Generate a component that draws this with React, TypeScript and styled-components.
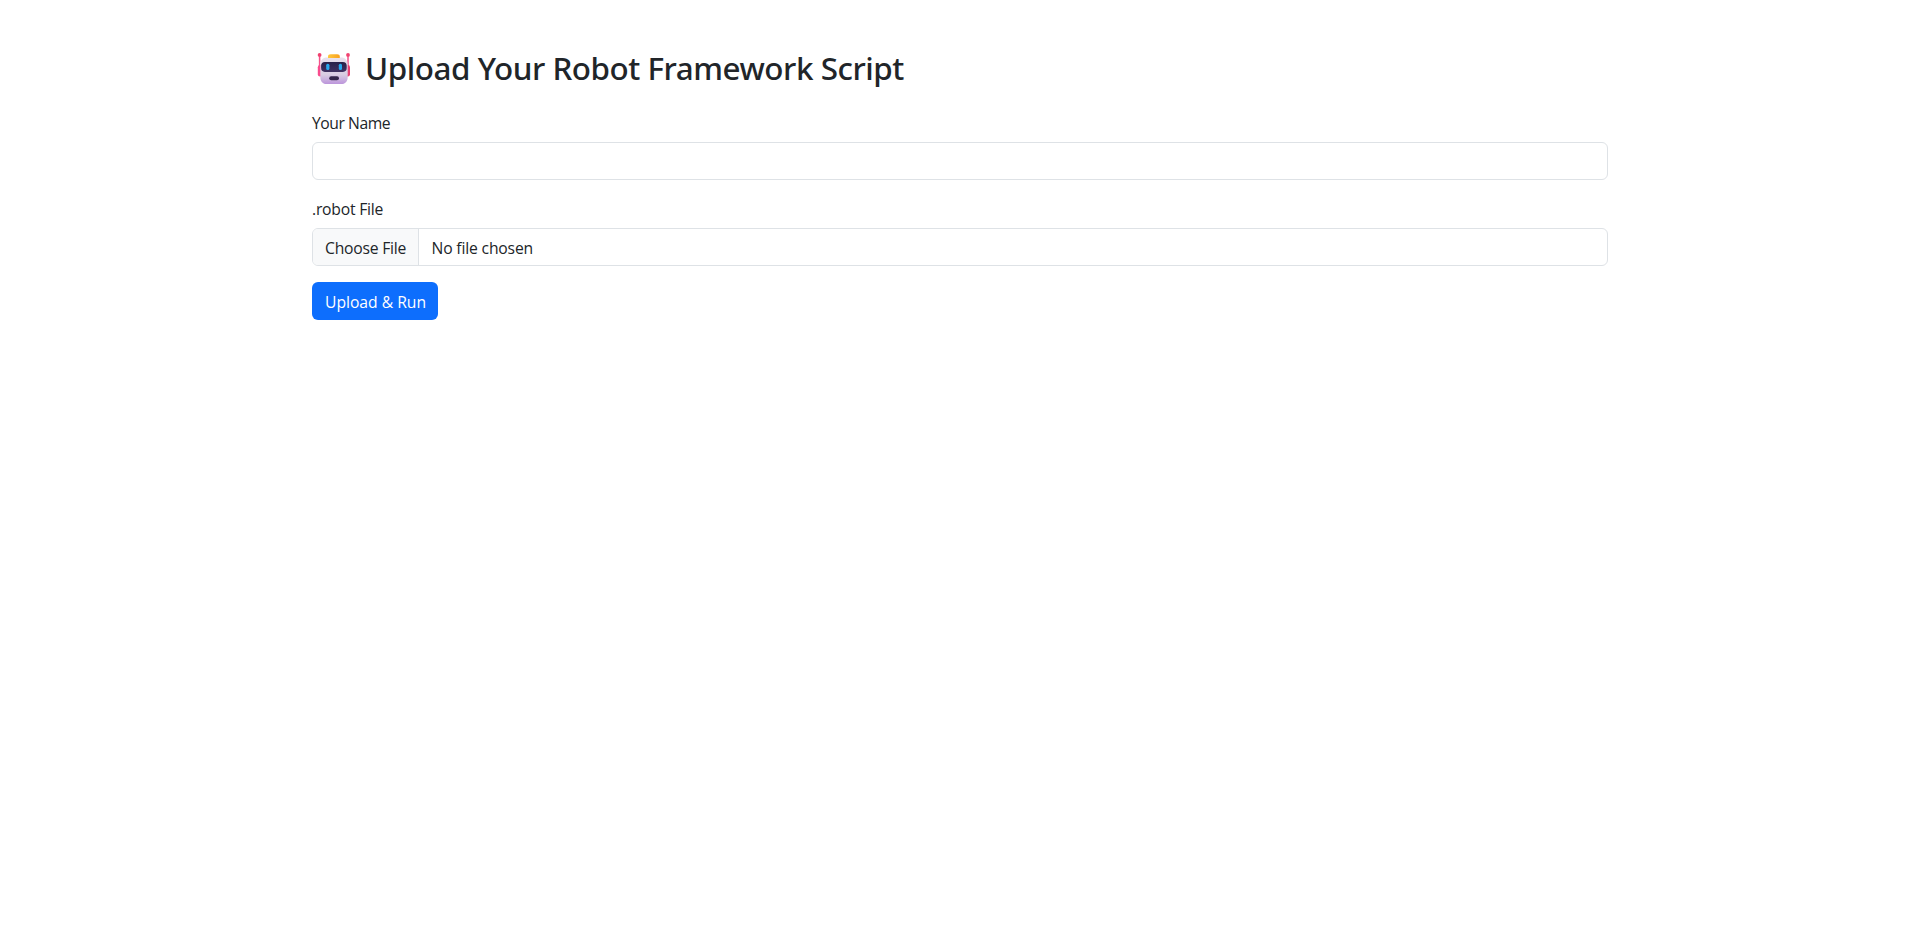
import React from "react";
import styled, { createGlobalStyle } from "styled-components";

const GlobalStyle = createGlobalStyle`
  *, *::before, *::after { box-sizing: border-box; }
  body {
    margin: 0;
    background: #fff;
    color: #212529;
    font-family: "Segoe UI", "Open Sans", "Noto Sans", sans-serif;
    font-size: 15.7px;
    line-height: 24px;
  }
`;

const Container = styled.main`
  width: 100%;
  max-width: 1320px;
  margin: 48px auto 0;
  padding: 0 12px;
`;

const Title = styled.h2`
  display: flex;
  align-items: center;
  height: 38.4px;
  margin: 0 0 24px;
  font-family: "Segoe UI", "Noto Sans", sans-serif;
  font-size: 31.4px;
  font-weight: 500;
  line-height: 38.4px;
  white-space: nowrap;
`;

const TitleText = styled.span`
  padding-top: 2px;
  letter-spacing: -0.46px;
`;

const RobotIcon = styled.svg`
  flex: none;
  width: 34px;
  height: 34px;
  margin: 3px 14px 0 5px;
`;

const Spaced = styled.span<{ $tracking: number }>`
  letter-spacing: ${(p) => p.$tracking}px;
  white-space: nowrap;
`;

const Field = styled.div`
  margin-bottom: 16px;
`;

const Label = styled.label`
  display: block;
  width: max-content;
  padding-top: 1px;
  margin-bottom: 7px;
`;

const TextInput = styled.input`
  display: block;
  width: 100%;
  height: 38px;
  padding: 6px 12px;
  border: 1px solid #dee2e6;
  border-radius: 6px;
  background: #fff;
  color: inherit;
  font: inherit;
  outline: none;
`;

const FilePicker = styled.div`
  display: flex;
  height: 38px;
  overflow: hidden;
  border: 1px solid #dee2e6;
  border-radius: 6px;
  background: #fff;
`;

const FileButton = styled.button`
  width: 106px;
  padding: 1px 0 0 12px;
  border: 0;
  border-right: 1px solid #dee2e6;
  background: #f8f9fa;
  color: inherit;
  font: inherit;
  text-align: left;
`;

const FileName = styled.span`
  padding: 6.5px 12px 0 12.5px;
`;

const SubmitButton = styled.button`
  display: block;
  width: 126px;
  height: 38px;
  padding: 1px 0 0 13px;
  border: 0;
  border-radius: 6px;
  background: #0d6efd;
  color: #fff;
  font: inherit;
  text-align: left;
`;

function Robot() {
  return (
    <RobotIcon viewBox="0 0 34 34" aria-hidden="true">
      <defs>
        <linearGradient id="face" x1="0" y1="0" x2="0" y2="1">
          <stop offset="0" stopColor="#e9e2ee" />
          <stop offset="0.65" stopColor="#d9cbe2" />
          <stop offset="1" stopColor="#bb94db" />
        </linearGradient>
        <linearGradient id="visor" x1="0" y1="0" x2="0" y2="1">
          <stop offset="0" stopColor="#29224b" />
          <stop offset="1" stopColor="#403062" />
        </linearGradient>
        <linearGradient id="cap" x1="0" y1="0" x2="1" y2="0">
          <stop offset="0" stopColor="#ffc83d" />
          <stop offset="1" stopColor="#f9a11e" />
        </linearGradient>
      </defs>
      <path d="M2.6 3v13M31 3v13" stroke="#f4528a" strokeWidth="1.5" />
      <circle cx="2.6" cy="2.9" r="1.9" fill="#f0426f" />
      <circle cx="31" cy="2.9" r="1.9" fill="#f0426f" />
      <rect x="0.8" y="13" width="5" height="11.5" rx="2.2" fill="#f94b8d" />
      <rect x="28" y="13" width="5" height="11.5" rx="2.2" fill="#e83f73" />
      <path d="M10 5.4h14c4.2 0 6.7 2.7 6.7 7v12.6c0 4.6-2.5 7.1-6.7 7.1H10c-4.2 0-6.7-2.5-6.7-7.1V12.4c0-4.3 2.5-7 6.7-7Z" fill="url(#face)" />
      <path d="M11 6V4.4C11 2.9 12 2.2 13.6 2.2h6.6c1.6 0 2.6.7 2.6 2.2V6Z" fill="url(#cap)" />
      <rect x="4.1" y="10" width="25.6" height="9.9" rx="3.8" fill="url(#visor)" />
      <rect x="9.2" y="11.8" width="3.2" height="6.2" rx="1.5" fill="#27a8ef" />
      <rect x="21.8" y="11.8" width="3.2" height="6.2" rx="1.5" fill="#27a8ef" />
      <rect x="12.2" y="24.2" width="9.8" height="4" rx="2" fill="#35254b" />
    </RobotIcon>
  );
}

export default function App() {
  return (
    <>
      <GlobalStyle />
      <Container>
        <Title>
          <Robot />
          <TitleText>Upload Your Robot Framework Script</TitleText>
        </Title>
        <form onSubmit={(e) => e.preventDefault()}>
          <Field>
            <Label htmlFor="name"><Spaced $tracking={-0.45}>Your Name</Spaced></Label>
            <TextInput id="name" type="text" />
          </Field>
          <Field>
            <Label><Spaced $tracking={-0.22}>.robot File</Spaced></Label>
            <FilePicker>
              <FileButton type="button"><Spaced $tracking={-0.22}>Choose File</Spaced></FileButton>
              <FileName><Spaced $tracking={-0.17}>No file chosen</Spaced></FileName>
            </FilePicker>
          </Field>
          <SubmitButton type="submit"><Spaced $tracking={-0.02}>Upload &amp; Run</Spaced></SubmitButton>
        </form>
      </Container>
    </>
  );
}
